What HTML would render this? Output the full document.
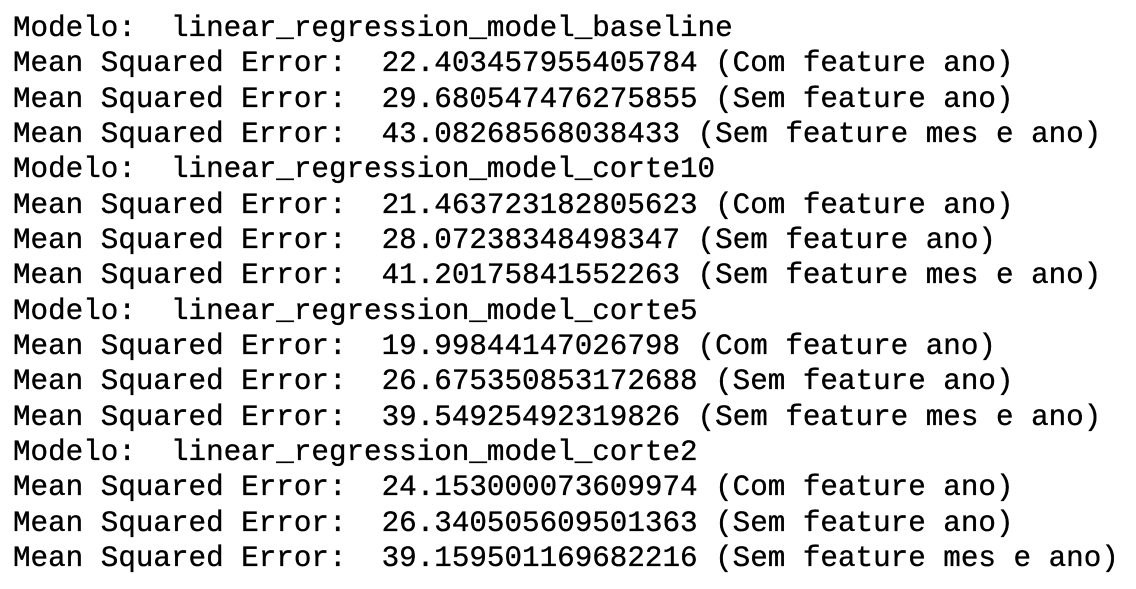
<!DOCTYPE html>
<html><head><meta charset="utf-8"><style>
html,body{margin:0;padding:0;background:#fff;width:1136px;height:589px;overflow:hidden}
pre{margin:0;padding:11px 0 0 13px;font-family:"Liberation Mono",monospace;font-size:29.25px;line-height:35.33px;color:#000;white-space:pre;-webkit-text-stroke:0.35px #000}
</style></head><body><pre>Modelo:  linear_regression_model_baseline
Mean Squared Error:  22.403457955405784 (Com feature ano)
Mean Squared Error:  29.680547476275855 (Sem feature ano)
Mean Squared Error:  43.08268568038433 (Sem feature mes e ano)
Modelo:  linear_regression_model_corte10
Mean Squared Error:  21.463723182805623 (Com feature ano)
Mean Squared Error:  28.07238348498347 (Sem feature ano)
Mean Squared Error:  41.20175841552263 (Sem feature mes e ano)
Modelo:  linear_regression_model_corte5
Mean Squared Error:  19.99844147026798 (Com feature ano)
Mean Squared Error:  26.675350853172688 (Sem feature ano)
Mean Squared Error:  39.54925492319826 (Sem feature mes e ano)
Modelo:  linear_regression_model_corte2
Mean Squared Error:  24.153000073609974 (Com feature ano)
Mean Squared Error:  26.340505609501363 (Sem feature ano)
Mean Squared Error:  39.159501169682216 (Sem feature mes e ano)</pre></body></html>
